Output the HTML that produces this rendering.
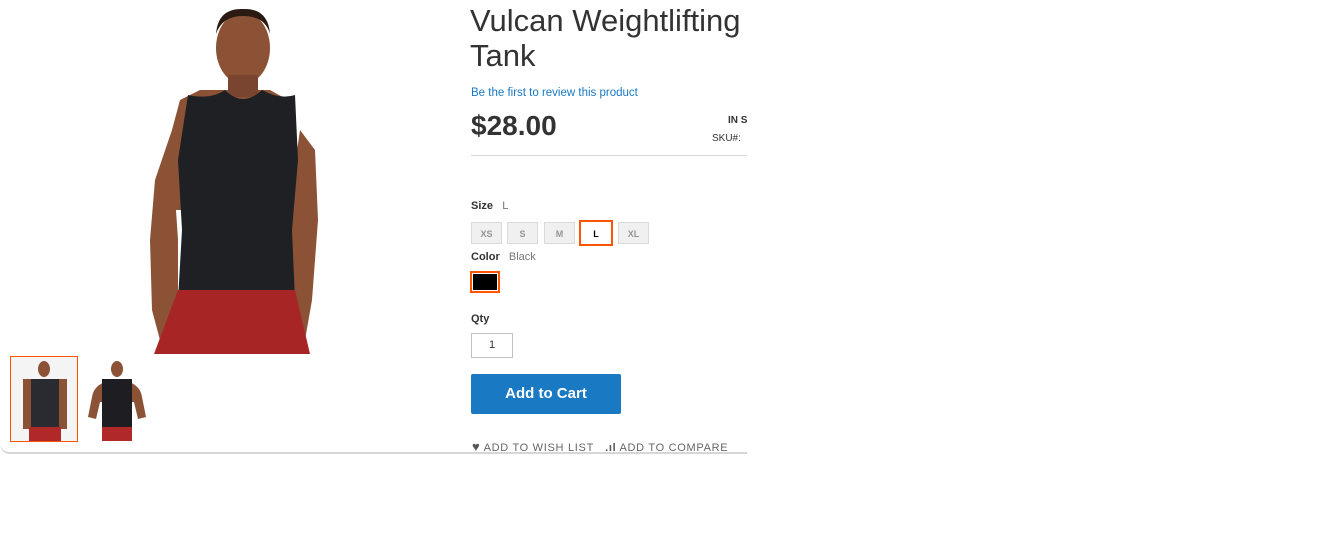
<!DOCTYPE html>
<html><head><style>
body{margin:0;width:1327px;height:537px;background:#fff;position:relative;overflow:hidden;font-family:"Liberation Sans",sans-serif;color:#333}
.a{position:absolute}
.sw{position:absolute;top:222px;height:22px;background:#f0f0f0;border:1px solid #dadada;font-size:9px;font-weight:bold;color:#949494;text-align:center;line-height:22px;box-sizing:border-box}
</style></head><body>
<div class="a" style="left:0;top:0;width:747px;height:452px;border-bottom:2px solid #d6d6d6;border-bottom-left-radius:10px"></div>
<svg class="a" style="left:140px;top:0" width="190" height="354">
<path d="M150 180 L148 100 L130 90 L60 90 L40 100 L32 130 L15 180 L10 240 L12 310 L20 340 L35 340 L38 300 L38 240 L36 210 L150 210 Z" fill="#8b5236"/>
<path d="M160 130 L175 150 L178 220 L172 300 L165 340 L150 340 L150 200 Z" fill="#8b5236"/>
<ellipse cx="103" cy="48" rx="27" ry="36" fill="#8b5236"/>
<path d="M76 34 Q78 8 103 9 Q128 8 130 34 Q125 16 103 16 Q82 16 76 34Z" fill="#2a1a12"/>
<rect x="88" y="75" width="30" height="22" fill="#7a4530"/>
<path d="M48 95 Q70 100 85 90 Q103 108 122 90 Q140 100 155 95 L158 160 L152 230 L155 300 L38 300 L42 230 L38 160 Z" fill="#1f2024"/>
<path d="M38 290 L155 290 L170 354 L14 354 Z" fill="#a82525"/>
</svg>
<div class="a" style="left:10px;top:356px;width:66px;height:84px;border:1px solid #ff5501;background:#f4f4f4"></div>
<svg class="a" style="left:11px;top:357px" width="66" height="84"><ellipse cx="33" cy="12" rx="6" ry="8" fill="#8b5236"/><rect x="12" y="22" width="44" height="50" fill="#8b5236"/><rect x="20" y="22" width="28" height="50" fill="#2a2b30"/><rect x="18" y="70" width="32" height="14" fill="#b02828"/></svg>
<svg class="a" style="left:84px;top:357px" width="66" height="84"><ellipse cx="33" cy="12" rx="6" ry="8" fill="#8b5236"/><path d="M8 40 Q10 25 33 22 Q56 25 58 40 L62 60 L54 62 L50 45 L16 45 L12 62 L4 60Z" fill="#8b5236"/><rect x="18" y="22" width="30" height="52" fill="#1d1d22"/><rect x="18" y="70" width="30" height="14" fill="#b02828"/></svg>
<div class="a" style="left:470px;top:3px;font-size:31px;line-height:35px;color:#333">Vulcan Weightlifting<br>Tank</div>
<div class="a" style="left:471px;top:87px;font-size:11.5px;color:#1979c3">Be the first to review this product</div>
<div class="a" style="left:471px;top:110px;font-size:28px;font-weight:bold;color:#333">$28.00</div>
<div class="a" style="left:728px;top:115px;font-size:10px;font-weight:bold;width:19px;overflow:hidden;white-space:nowrap">IN STOCK</div>
<div class="a" style="left:712px;top:133px;font-size:10px;width:33px;overflow:hidden;white-space:nowrap">SKU#: &nbsp;MT</div>
<div class="a" style="left:471px;top:155px;width:276px;height:1px;background:#d6d6d6"></div>
<div class="a" style="left:471px;top:200px;font-size:11px"><b>Size</b>&nbsp;&nbsp;&nbsp;<span style="color:#777">L</span></div>
<div class="sw" style="left:471px;width:31px">XS</div>
<div class="sw" style="left:507px;width:31px">S</div>
<div class="sw" style="left:544px;width:31px">M</div>
<div class="sw" style="left:579px;top:220px;width:34px;height:26px;line-height:24px;background:#fff;border:2px solid #ff5501;color:#000">L</div>
<div class="sw" style="left:618px;width:31px">XL</div>
<div class="a" style="left:471px;top:251px;font-size:11px"><b>Color</b>&nbsp;&nbsp;&nbsp;<span style="color:#777">Black</span></div>
<div class="a" style="left:470px;top:271px;width:30px;height:22px;box-sizing:border-box;border:2px solid #ff5501;background:#000;box-shadow:inset 0 0 0 1px #fff"></div>
<div class="a" style="left:471px;top:313px;font-size:11px;font-weight:bold">Qty</div>
<div class="a" style="left:471px;top:333px;width:42px;height:25px;box-sizing:border-box;border:1px solid #c2c2c2;font-size:11px;text-align:center;line-height:23px">1</div>
<div class="a" style="left:471px;top:374px;width:150px;height:40px;background:#1979c3;border-radius:2px;color:#fff;font-size:15px;font-weight:bold;text-align:center;line-height:40px">Add to Cart</div>
<div class="a" style="left:472px;top:439px;font-size:11px;color:#666;letter-spacing:.7px;white-space:nowrap"><span style="color:#555;font-size:13px">&#9829;</span> ADD TO WISH LIST &nbsp;&nbsp;<b style="font-size:11px;color:#555">.ıl</b> ADD TO COMPARE</div>
</body></html>
